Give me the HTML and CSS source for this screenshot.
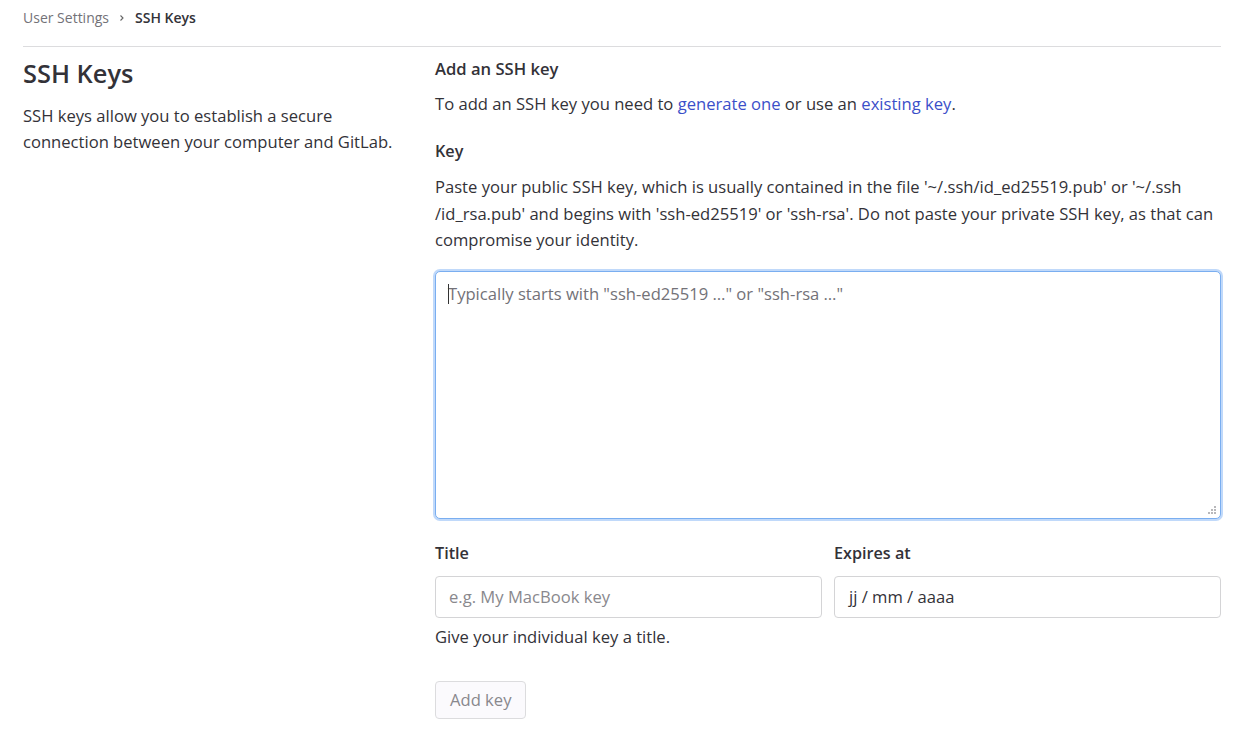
FILE: index.html
```html
<!DOCTYPE html>
<html lang="en">
<head>
<meta charset="utf-8">
<title>SSH Keys · User Settings</title>
<link rel="stylesheet" href="styles.css">
</head>
<body>
<div class="page">
  <nav class="breadcrumb">
    <a class="crumb" href="#">User Settings</a>
    <svg class="chev" width="8" height="8" viewBox="0 0 8 8"><path d="M2.5 1.5 L5 4 L2.5 6.5" fill="none" stroke="#666" stroke-width="1.1"/></svg>
    <span class="crumb-current">SSH Keys</span>
  </nav>
  <div class="layout">
    <aside class="side">
      <h1 class="side-title">SSH Keys</h1>
      <p class="side-text">SSH keys allow you to establish a secure connection between your computer and GitLab.</p>
    </aside>
    <main class="main">
      <h2 class="section-title">Add an SSH key</h2>
      <p class="intro">To add an SSH key you need to <a href="#">generate one</a> or use an <a href="#">existing key</a>.</p>
      <label class="label label-key" for="key">Key</label>
      <p class="help-long">Paste your public SSH key, which is usually contained in the file '~/.ssh/id_ed25519.pub' or '~/.ssh<br>/id_rsa.pub' and begins with 'ssh-ed25519' or 'ssh-rsa'. Do not paste your private SSH key, as that can<br>compromise your identity.</p>
      <div class="textarea-wrap">
        <textarea id="key" class="key-area" placeholder="Typically starts with &quot;ssh-ed25519 …&quot; or &quot;ssh-rsa …&quot;"></textarea>
        <span class="caret"></span>
        <svg class="grip" width="9" height="9" viewBox="0 0 9 9">
          <rect x="6" y="0" width="2" height="2"/>
          <rect x="3" y="3" width="2" height="2"/><rect x="6" y="3" width="2" height="2"/>
          <rect x="0" y="6" width="2" height="2"/><rect x="3" y="6" width="2" height="2"/><rect x="6" y="6" width="2" height="2"/>
        </svg>
      </div>
      <div class="row">
        <div class="field">
          <label class="label" for="title">Title</label>
          <input id="title" class="input" type="text" placeholder="e.g. My MacBook key">
          <p class="hint">Give your individual key a title.</p>
        </div>
        <div class="field">
          <label class="label" for="exp">Expires at</label>
          <div class="input date">jj / mm / aaaa</div>
        </div>
      </div>
      <button class="btn" type="button">Add key</button>
    </main>
  </div>
</div>
</body>
</html>
```
FILE: styles.css
```css
html, body {
  margin: 0;
  padding: 0;
  background: #fff;
}
body {
  font-family: "Open Sans", "Noto Sans", sans-serif;
  color: #333238;
  font-size: 16.6px;
}
.page {
  padding: 0 39px 0 23px;
}
.breadcrumb {
  display: flex;
  align-items: flex-start;
  gap: 9px;
  height: 47px;
  box-sizing: border-box;
  padding-top: 8px;
  border-bottom: 1px solid #dcdcde;
  font-size: 14px;
  line-height: 20px;
}
.crumb {
  color: #737278;
  text-decoration: none;
}
.chev { margin: 6px 0 0; }
.crumb-current {
  color: #333238;
  font-weight: 600;
}
.layout {
  display: grid;
  grid-template-columns: 400px 1fr;
  column-gap: 12px;
}
.side-title {
  margin: 10px 0 0;
  font-size: 25.4px;
  line-height: 32px;
  font-weight: 600;
}
.side-text {
  max-width: 395px;
  margin: 14px 0 0;
  line-height: 26px;
}
.main {
  padding-top: 10px;
}
.section-title {
  margin: 0;
  font-size: 16.6px;
  line-height: 24px;
  font-weight: 600;
}
.intro {
  margin: 10px 0 0;
  line-height: 26px;
}
.intro a {
  color: #3b4fc9;
  text-decoration: none;
}
.label {
  display: block;
  font-weight: 600;
  font-size: 16.2px;
  line-height: 24px;
}
.label-key {
  margin-top: 22px;
}
.help-long {
  margin: 11px 0 0;
  line-height: 26.5px;
}
.textarea-wrap {
  position: relative;
  margin-top: 17px;
}
.key-area {
  display: block;
  box-sizing: border-box;
  width: 100%;
  height: 248px;
  margin: 0;
  padding: 10px 12px;
  border: 1px solid #7aaef0;
  border-radius: 5px;
  box-shadow: 0 0 0 2px #c0d9fa;
  font-family: inherit;
  font-size: 16.6px;
  line-height: 24px;
  color: #333238;
  resize: none;
  outline: none;
}
.key-area::placeholder {
  color: #737278;
}
.caret {
  position: absolute;
  left: 13px;
  top: 13px;
  width: 1px;
  height: 20px;
  background: #333;
}
.grip {
  position: absolute;
  right: 4px;
  bottom: 4px;
  fill: #b8b8bb;
}
.row {
  display: grid;
  grid-template-columns: 1fr 1fr;
  column-gap: 12px;
  margin-top: 22px;
}
.field .label {
  margin-bottom: 11px;
}
.input {
  display: block;
  box-sizing: border-box;
  width: 100%;
  height: 42px;
  margin: 0;
  padding: 0 13px;
  border: 1px solid #d4d4d6;
  border-radius: 4px;
  font-family: inherit;
  font-size: 16.6px;
  color: #333238;
  background: #fff;
}
.input::placeholder { color: #89888d; }
.date {
  display: flex;
  align-items: center;
  padding-left: 14px;
}
.hint {
  margin: 7px 0 0;
  line-height: 24px;
  color: #333238;
}
.btn {
  display: block;
  margin-top: 32px;
  height: 38px;
  padding: 0 14px;
  border: 1px solid #dcdcde;
  border-radius: 4px;
  background: #fbfafd;
  color: #89888d;
  font-family: inherit;
  font-size: 16.6px;
}
```
